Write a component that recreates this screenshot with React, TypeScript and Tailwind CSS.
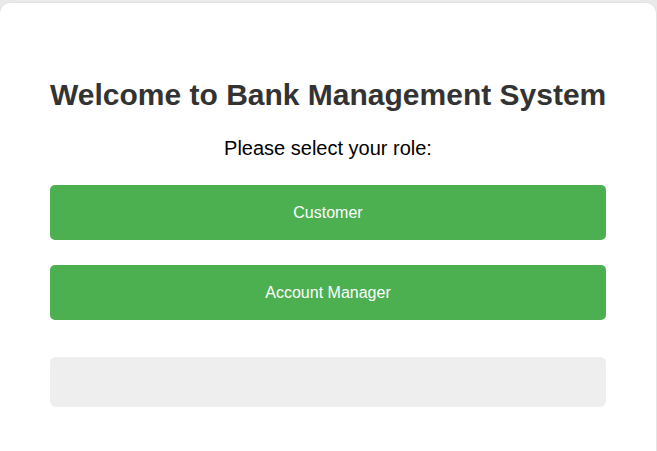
import { FC } from 'react';

const RoleButton: FC<{ label: string }> = ({ label }) => (
  <button className="w-full h-[55px] rounded-[5px] bg-[#4caf50] text-white text-[16px] hover:bg-[#45a049] transition-all">
    {label}
  </button>
);

const App: FC = () => {
  return (
    <div className="min-h-[451px] bg-[#e9e9e9] pt-[3px] font-['Liberation_Sans',Arial,sans-serif] overflow-hidden">
      <div className="w-[656px] h-[460px] bg-white rounded-[10px] shadow-[0_0_2px_rgba(0,0,0,0.08)] px-[50px] pt-[74px]">
        <h1 className="text-[30px] leading-9 font-bold text-[#333] text-center whitespace-nowrap">
          Welcome to Bank Management System
        </h1>
        <p className="mt-[21px] text-[20px] leading-7 text-black text-center">
          Please select your role:
        </p>
        <div className="mt-[23px] flex flex-col gap-[25px]">
          <RoleButton label="Customer" />
          <RoleButton label="Account Manager" />
        </div>
        <div className="mt-[37px] h-[50px] rounded-[6px] bg-[#eeeeee]" />
      </div>
    </div>
  );
};

export default App;
